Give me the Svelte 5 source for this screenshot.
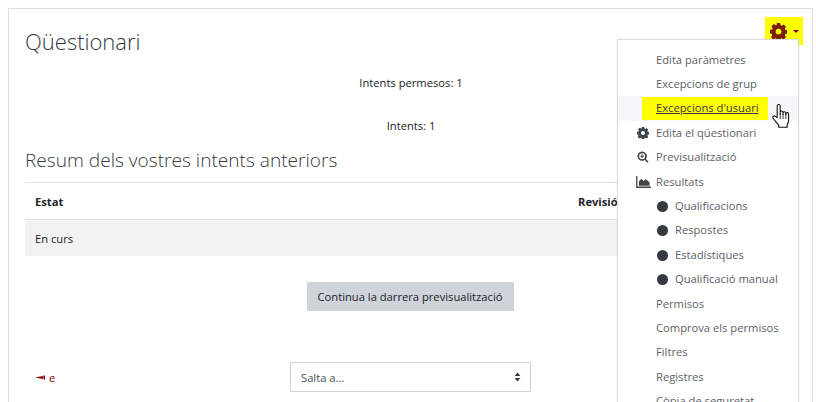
<script>
  const top = [
    { label: 'Edita paràmetres' },
    { label: 'Excepcions de grup' },
    { label: "Excepcions d'usuari", active: true },
    { label: 'Edita el qüestionari', icon: 'gear' },
    { label: 'Previsualització', icon: 'zoom' },
    { label: 'Resultats', icon: 'chart' },
    { label: 'Qualificacions', sub: true },
    { label: 'Respostes', sub: true },
    { label: 'Estadístiques', sub: true },
    { label: 'Qualificació manual', sub: true },
    { label: 'Permisos' },
    { label: 'Comprova els permisos' },
    { label: 'Filtres' },
    { label: 'Registres' },
    { label: 'Còpia de seguretat' }
  ];
  const gear = 'M7.4 0h3.6l.5 2.4 1.2.5 2.1-1.3 2.5 2.5-1.3 2.1.5 1.2 2.4.5v3.6l-2.4.5-.5 1.2 1.3 2.1-2.5 2.5-2.1-1.3-1.2.5-.5 2.4H7.4l-.5-2.4-1.2-.5-2.1 1.3-2.5-2.5 1.3-2.1-.5-1.2L0 11V7.4l2.4-.5.5-1.2L1.6 3.6 4.1 1.1l2.1 1.3 1.2-.5zM9.2 6.1a3.1 3.1 0 1 0 0 6.2 3.1 3.1 0 0 0 0-6.2z';
</script>

<div class="card">
  <header class="head">
    <h1>Qüestionari</h1>
    <div class="tools">
      <svg class="cog" viewBox="0 0 18.4 18.4" aria-hidden="true"><path fill-rule="evenodd" d={gear} /></svg>
      <span class="caret"></span>
    </div>
  </header>

  <p class="info first">Intents permesos: 1</p>
  <p class="info second">Intents: 1</p>

  <h2>Resum dels vostres intents anteriors</h2>

  <div class="table">
    <div class="row th"><span class="c1">Estat</span><span class="c2">Revisió</span></div>
    <div class="row td"><span class="c1">En curs</span></div>
  </div>

  <div class="action"><button type="button">Continua la darrera previsualització</button></div>

  <div class="jump">
    <a class="prev" href="#prev"><svg viewBox="0 0 10 5" aria-hidden="true"><path d="M0 2.2 8 .8v3.4L0 2.9z" /><rect x="8.4" y=".2" width="1.6" height="4.6" /></svg> e</a>
    <div class="select"><span>Salta a...</span>
      <svg viewBox="0 0 8 12" aria-hidden="true"><path d="M4 .5 7.5 4.8H.5zM4 11.5.5 7.2h7z" /></svg>
    </div>
  </div>

  <nav class="menu">
    {#each top as item}
      <div class="item" class:active={item.active} class:sub={item.sub}>
        {#if item.icon === 'gear'}
          <svg class="ico" viewBox="0 0 18.4 18.4" aria-hidden="true"><path fill-rule="evenodd" d={gear} /></svg>
        {:else if item.icon === 'zoom'}
          <svg class="ico" viewBox="0 0 14 14" aria-hidden="true"><path fill-rule="evenodd" d="M6 .5a5.5 5.5 0 0 1 4.4 8.8l3.2 3.2-1.3 1.3-3.2-3.2A5.5 5.5 0 1 1 6 .5zm0 2a3.5 3.5 0 1 0 0 7 3.5 3.5 0 0 0 0-7z" /><path d="M5.4 3.8h1.2v1.6h1.6v1.2H6.6v1.6H5.4V6.6H3.8V5.4h1.6z" /></svg>
        {:else if item.icon === 'chart'}
          <svg class="ico wide" viewBox="0 0 16 13" aria-hidden="true"><path d="M0 0h1.4v11.5H16V13H0z" /><path d="M3 10.5V6l2.6-3 2.6 2.4L10.6 3.6 14.6 7v3.5z" /></svg>
        {:else if item.sub}
          <span class="dot"></span>
        {/if}
        <span class="lbl">{item.label}</span>
      </div>
    {/each}
  </nav>

  <svg class="hand" viewBox="0 0 20 26" aria-hidden="true">
    <path fill="#fff" stroke="#111" stroke-width="1.1" stroke-linejoin="round" d="M6.2 14.6V3a1.5 1.5 0 0 1 3 0v8.2-1.8a1.4 1.4 0 0 1 2.8 0v2-1.2a1.4 1.4 0 0 1 2.8 0v1.6-.8a1.4 1.4 0 0 1 2.8 0v6.2c0 2-.6 3.2-1.4 4.6v2.4H7.8v-2c-1.8-1.6-3.2-4-5.6-6.8-1.4-1.8.6-3.2 2-2.2z" />
    <path stroke="#111" stroke-width=".8" d="M9.2 11v5M12 11v5M14.8 11v5" />
  </svg>
</div>

<style>
  :global(body) {
    margin: 0;
    background: #fff;
    overflow: hidden;
  }
  .card {
    position: relative;
    box-sizing: border-box;
    width: 805px;
    height: 394px;
    margin: 8px 0 0 8px;
    padding: 16px 16px 0;
    border: 1px solid #dedede;
    border-bottom: 0;
    overflow: hidden;
    font: 11.2px/17px "Open Sans", sans-serif;
    color: #1d2125;
  }
  .head {
    display: flex;
    justify-content: space-between;
    height: 34px;
  }
  h1 {
    margin: -1px 0 0;
    font-size: 22px;
    font-weight: 300;
    line-height: 34px;
    color: #343a40;
  }
  .tools {
    display: flex;
    align-items: center;
    gap: 6px;
    box-sizing: border-box;
    width: 38px;
    height: 28px;
    margin: -8px -7px 0 0;
    padding-left: 5px;
    background: #ffff00;
  }
  .cog { width: 17px; height: 17px; fill: #7b1e0a; }
  .caret {
    width: 0;
    height: 0;
    border: 3.5px solid transparent;
    border-top-color: #8b0000;
    border-bottom: 0;
  }
  .info {
    margin: 0;
    text-align: center;
    width: 772px;
  }
  .first { margin-top: 15px; }
  .second { margin-top: 26px; }
  h2 {
    margin: 13px 0 0;
    font-size: 19.1px;
    font-weight: 300;
    line-height: 26px;
    color: #343a40;
  }
  .table { margin-top: 9px; }
  .row {
    display: flex;
    align-items: center;
    padding: 0 10px;
  }
  .th {
    height: 36px;
    border-top: 1px solid #dee2e6;
    border-bottom: 1px solid #dee2e6;
    font-weight: 700;
    color: #212529;
  }
  .td { height: 36px; background: #f2f2f2; }
  .c1 { width: 543px; }
  .action {
    display: flex;
    justify-content: center;
    width: 770px;
    margin-top: 26px;
  }
  button {
    width: 207px;
    height: 29px;
    padding: 0;
    border: 0;
    background: #ced4da;
    font: 11.2px "Open Sans", sans-serif;
    color: #1d2125;
  }
  .jump {
    display: flex;
    align-items: center;
    margin-top: 51px;
  }
  .prev {
    display: flex;
    align-items: center;
    gap: 4px;
    width: 265px;
    padding-left: 11px;
    box-sizing: border-box;
    color: #8b0000;
    text-decoration: none;
  }
  .prev svg { width: 9px; height: 5px; fill: #8b0000; }
  .select {
    display: flex;
    justify-content: space-between;
    align-items: center;
    box-sizing: border-box;
    width: 241px;
    height: 30px;
    padding: 0 9px 0 10px;
    border: 1px solid #ced4da;
    font-size: 11.2px;
    color: #495057;
  }
  .select svg { width: 7px; height: 10px; fill: #343a40; }
  .menu {
    position: absolute;
    top: 30px;
    left: 608px;
    box-sizing: border-box;
    width: 182px;
    padding: 7.6px 0;
    background: #fff;
    border: 1px solid #dcdcdc;
    box-shadow: 0 0 2px rgba(0, 0, 0, .08);
    color: #5c6166;
  }
  .item {
    position: relative;
    height: 24.4px;
    line-height: 24px;
    padding-left: 38px;
    white-space: nowrap;
  }
  .sub { padding-left: 57px; }
  .active { background: #f6f7f9; }
  .active .lbl {
    display: inline-block;
    position: relative;
    z-index: 0;
    text-decoration: underline;
    color: #343a40;
  }
  .active .lbl::before {
    content: "";
    position: absolute;
    z-index: -1;
    inset: 1px -9px 0 -14px;
    background: #ffff00;
  }
  .ico {
    position: absolute;
    left: 19px;
    top: 6px;
    width: 12px;
    height: 12px;
    fill: #3f454b;
  }
  .ico.wide { left: 18px; width: 15px; height: 12px; }
  .dot {
    position: absolute;
    left: 39px;
    top: 7px;
    width: 11px;
    height: 11px;
    border-radius: 50%;
    background: #343a40;
  }
  .hand {
    position: absolute;
    left: 762px;
    top: 94px;
    width: 20px;
    height: 26px;
  }
</style>
